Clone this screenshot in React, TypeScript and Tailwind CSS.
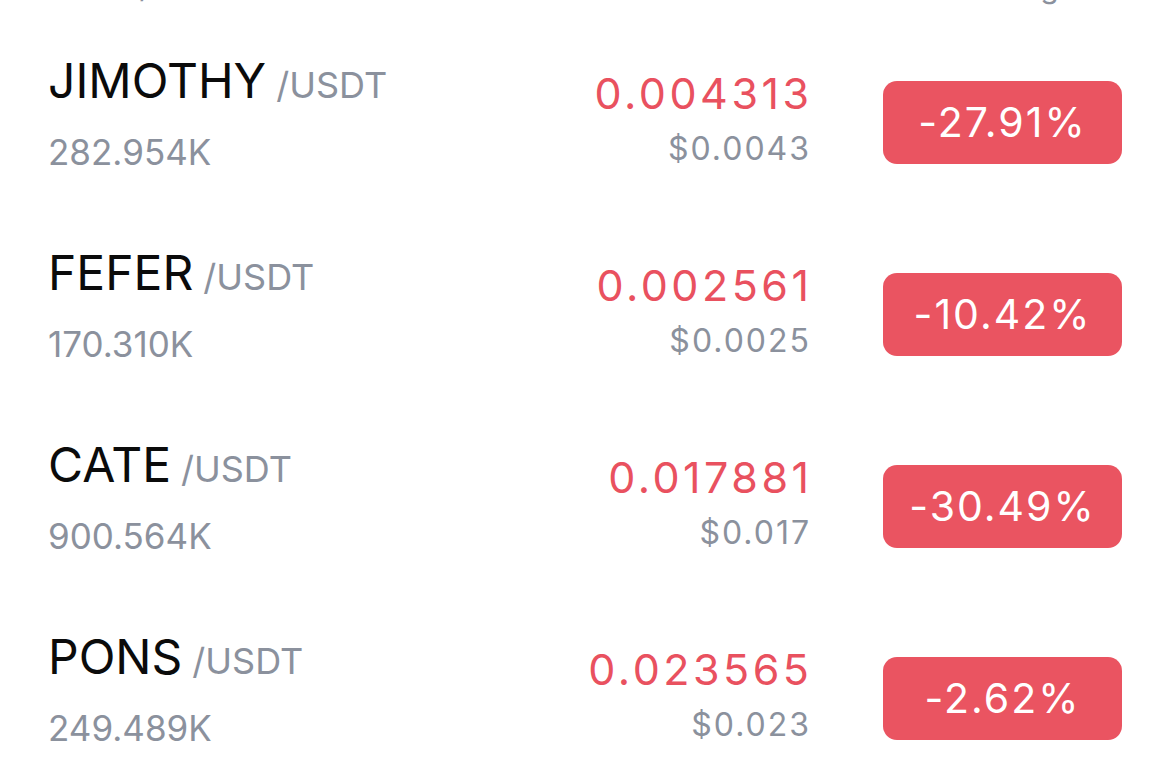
const rows = [
  { name: 'JIMOTHY', vol: '282.954K', price: '0.004313', usd: '$0.0043', change: '-27.91%' },
  { name: 'FEFER', vol: '170.310K', price: '0.002561', usd: '$0.0025', change: '-10.42%' },
  { name: 'CATE', vol: '900.564K', price: '0.017881', usd: '$0.017', change: '-30.49%' },
  { name: 'PONS', vol: '249.489K', price: '0.023565', usd: '$0.023', change: '-2.62%' },
];

export default function App() {
  return (
    <div
      className="w-[1170px] h-[775px] overflow-hidden bg-white"
      style={{ fontFamily: 'Inter, "Liberation Sans", sans-serif' }}
    >
      {/* header, mostly scrolled out of view */}
      <div className="h-[5px] flex items-end justify-between px-12 text-[30px] leading-[36px] text-[#8b919d]">
        <span>Name / Vol</span>
        <span className="w-[239px] text-right pr-[34px]">24h Chg%</span>
      </div>

      <div className="mt-[21px]">
        {rows.map((r) => (
          <div key={r.name} className="h-[192px] flex items-start px-12 pt-[31px]">
            <div className="flex-1">
              <div className="flex items-baseline">
                <span className="text-[48px] leading-none text-[#0b0b0b]">{r.name}</span>
                <span className="ml-[10px] text-[36px] leading-none text-[#8b919d]">/USDT</span>
              </div>
              <div className="mt-[30px] text-[35px] leading-none text-[#8b919d]">{r.vol}</div>
            </div>

            <div className="text-right mt-[15px]">
              <div className="text-[43px] leading-none tracking-[3.5px] mr-[-3.5px] text-[#e9515f]">{r.price}</div>
              <div className="mt-[18px] text-[32px] leading-none tracking-[2px] mr-[-2px] text-[#8b919d]">{r.usd}</div>
            </div>

            <div className="ml-[74px] mt-[24px] w-[239px] h-[83px] rounded-[14px] bg-[#ea5461] flex items-center justify-center text-white text-[41px] tracking-[2px]">
              {r.change}
            </div>
          </div>
        ))}
      </div>
    </div>
  );
}
